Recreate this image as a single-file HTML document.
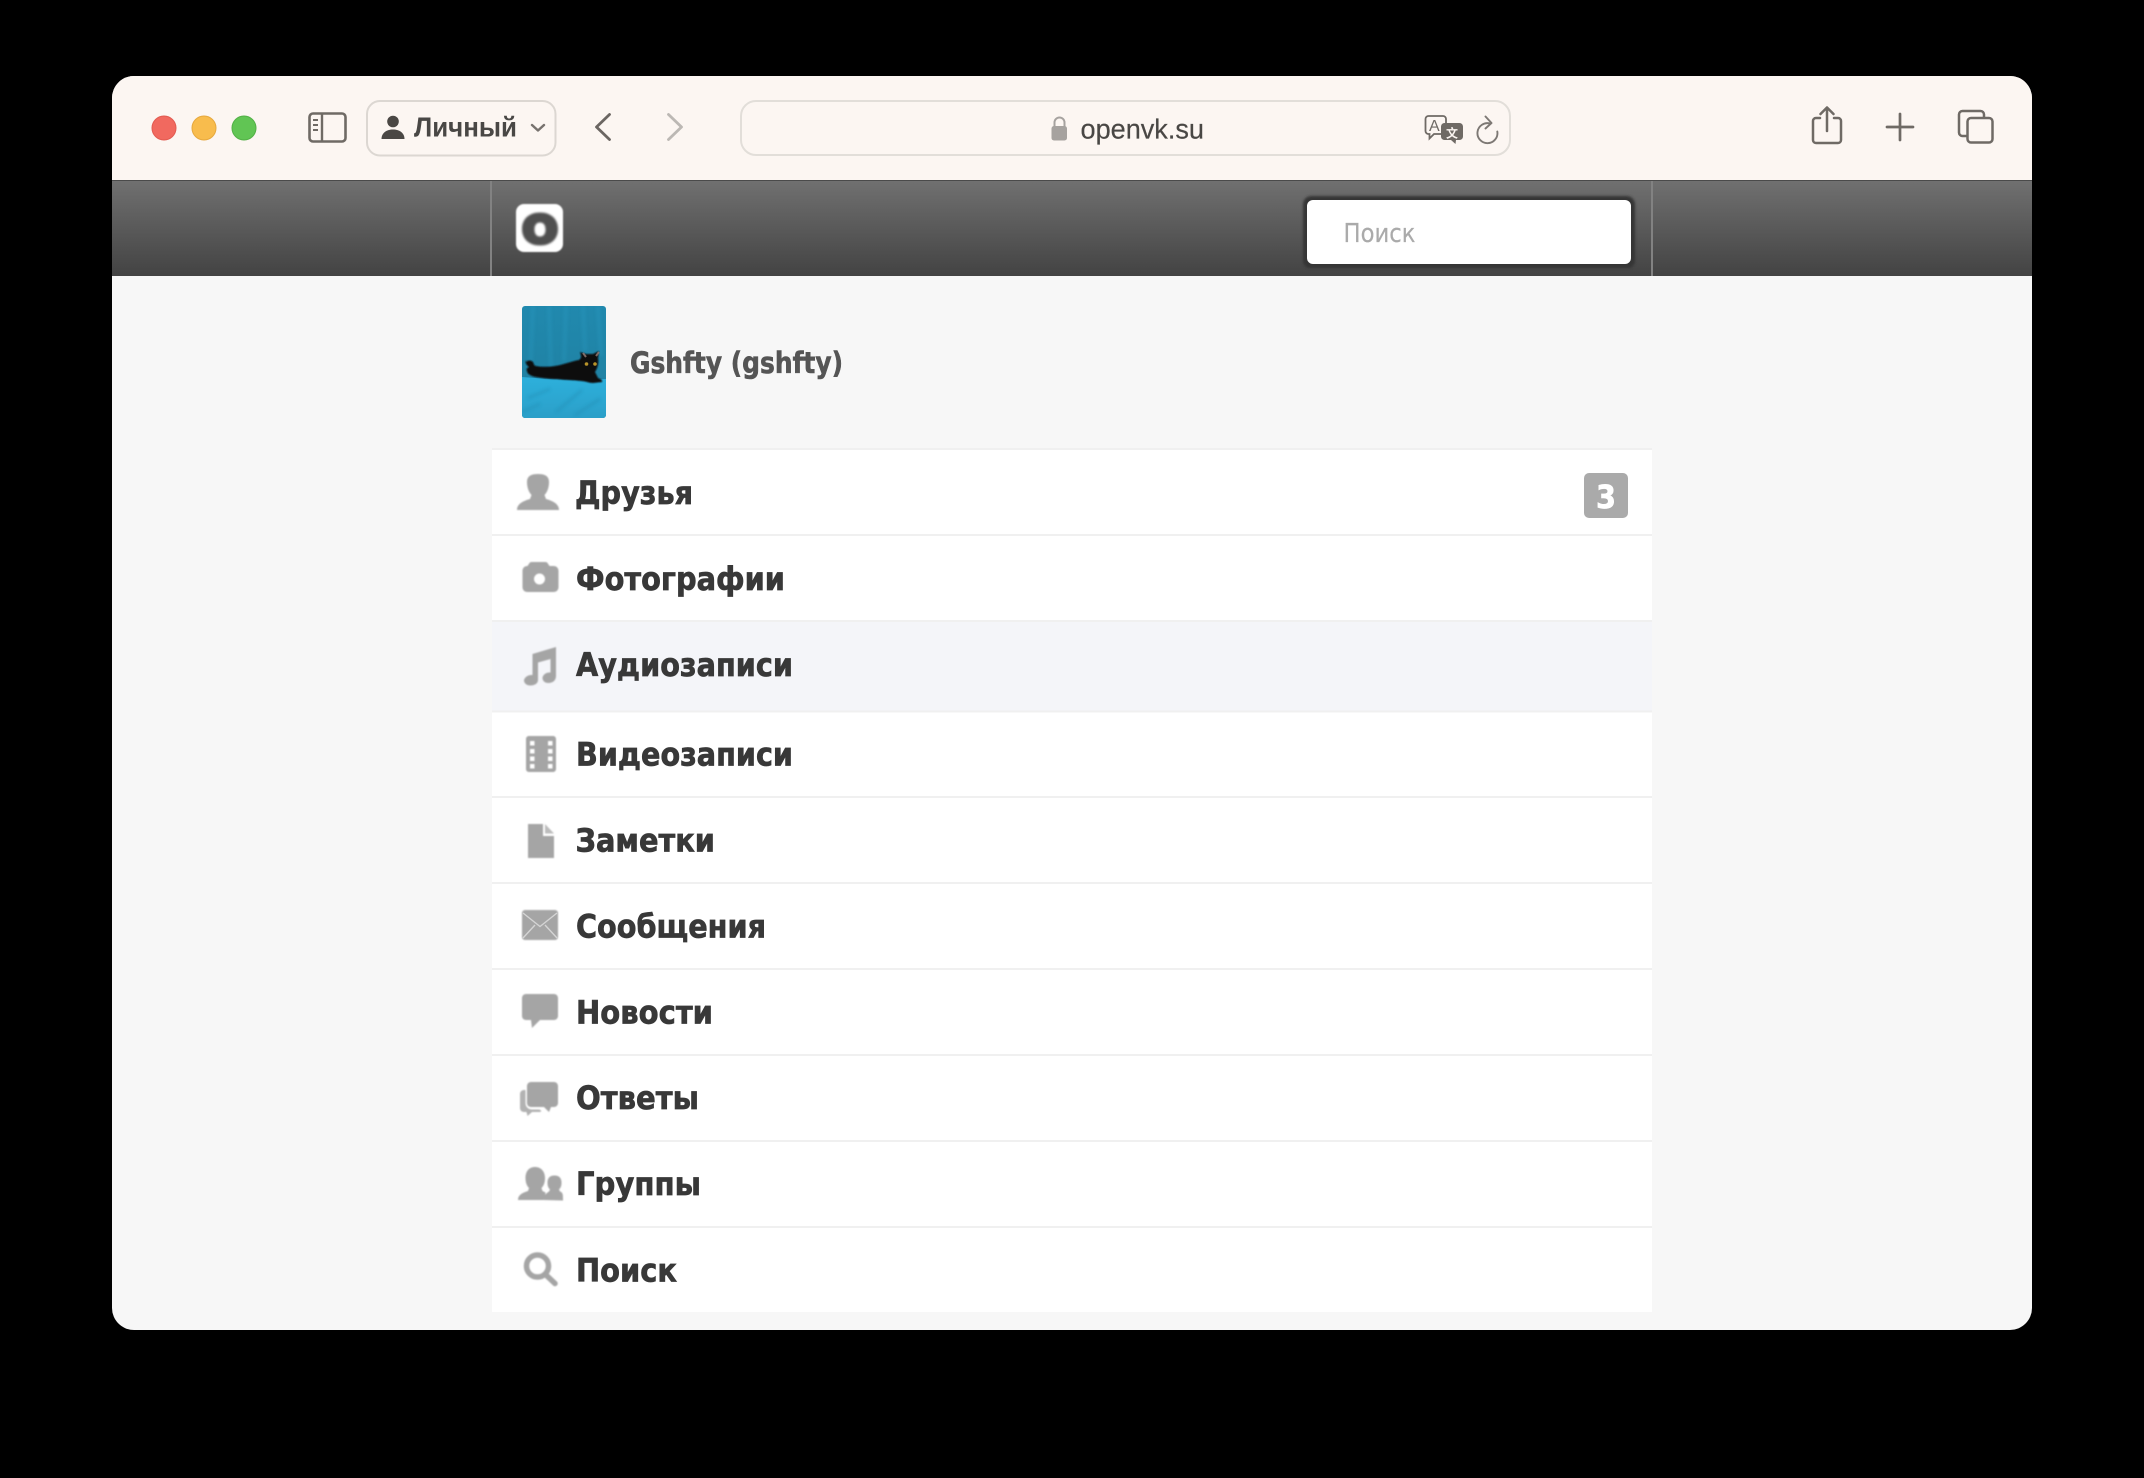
<!DOCTYPE html>
<html lang="ru">
<head>
<meta charset="utf-8">
<title>openvk.su</title>
<style>
html,body{margin:0;padding:0;background:#000;width:2144px;height:1478px;overflow:hidden}
svg{display:block}
.m{font-family:"DejaVu Sans",sans-serif;font-weight:700;font-size:32px;fill:#393939;stroke:#393939;stroke-width:.7px}
.ic{fill:#a5a5a5}
</style>
</head>
<body>
<svg xmlns="http://www.w3.org/2000/svg" width="2144" height="1478" viewBox="0 0 2144 1478">
<defs>
<clipPath id="win"><rect x="112" y="76" width="1920" height="1254" rx="22"/></clipPath>
<clipPath id="av"><rect x="522" y="306" width="84" height="112" rx="3"/></clipPath>
<linearGradient id="hd" x1="0" y1="0" x2="0" y2="1"><stop offset="0" stop-color="#707070"/><stop offset="1" stop-color="#434343"/></linearGradient>
<linearGradient id="avt" x1="0" y1="0" x2="0" y2="1"><stop offset="0" stop-color="#2189ae"/><stop offset="1" stop-color="#1f7f9f"/></linearGradient>
<linearGradient id="avb" x1="0" y1="0" x2="0" y2="1"><stop offset="0" stop-color="#2db0dc"/><stop offset="1" stop-color="#2b9fc8"/></linearGradient>
<filter id="b1" x="-20%" y="-20%" width="140%" height="140%"><feGaussianBlur stdDeviation="0.9"/></filter>
<filter id="b2" x="-5%" y="-30%" width="110%" height="160%"><feGaussianBlur stdDeviation="0.35"/></filter>
<filter id="b3" x="-20%" y="-20%" width="140%" height="140%"><feGaussianBlur stdDeviation="1.6"/></filter>
<filter id="b4" x="-20%" y="-20%" width="140%" height="140%"><feGaussianBlur stdDeviation="1"/></filter>
<filter id="sh" x="-5%" y="-10%" width="110%" height="120%"><feGaussianBlur stdDeviation="1.2"/></filter>
</defs>

<g clip-path="url(#win)">
  <rect x="112" y="76" width="1920" height="1254" fill="#f7f7f7"/>
  <!-- toolbar -->
  <rect x="112" y="76" width="1920" height="104" fill="#fcf6f2"/>
  <rect x="112" y="180" width="1920" height="1.5" fill="#4a4a4a"/>
  <!-- header -->
  <rect x="112" y="181" width="1920" height="95" fill="url(#hd)"/>
  <rect x="490" y="181" width="2" height="95" fill="#828282"/>
  <rect x="1651" y="181" width="2" height="95" fill="#828282"/>

  <!-- menu rows -->
  <rect x="492" y="449" width="1160" height="863" fill="#fff"/>
  <rect x="492" y="622" width="1160" height="89" fill="#f4f5f9"/>
  <g fill="#f0f0f0">
    <rect x="492" y="448" width="1160" height="2"/>
    <rect x="492" y="534" width="1160" height="2"/>
    <rect x="492" y="620" width="1160" height="2"/>
    <rect x="492" y="710.5" width="1160" height="2"/>
    <rect x="492" y="796" width="1160" height="2"/>
    <rect x="492" y="882" width="1160" height="2"/>
    <rect x="492" y="968" width="1160" height="2"/>
    <rect x="492" y="1054" width="1160" height="2"/>
    <rect x="492" y="1140" width="1160" height="2"/>
    <rect x="492" y="1226" width="1160" height="2"/>
  </g>
</g>

<!-- traffic lights -->
<circle cx="164" cy="128" r="12" fill="#f1695f" stroke="#e25a50" stroke-width="1"/>
<circle cx="204" cy="128" r="12" fill="#f8bc4d" stroke="#e6a83d" stroke-width="1"/>
<circle cx="244" cy="128" r="12" fill="#61c554" stroke="#52b046" stroke-width="1"/>

<!-- sidebar icon -->
<g fill="none" stroke="#6f6a65">
  <rect x="309.5" y="113.5" width="36" height="28" rx="3.5" stroke-width="2.6"/>
  <path d="M322 113v28" stroke-width="2.4"/>
  <path d="M313 120h5M313 125h5M313 130h5" stroke-width="2"/>
</g>

<!-- profile button -->
<rect x="367" y="101" width="188.500" height="54.500" rx="13" fill="#fcf6f2" stroke="#dcd7d2" stroke-width="2"/>
<circle cx="393" cy="121.500" r="5.800" fill="#4a4744"/>
<path d="M381.500 139c0-6 5-9.500 11.500-9.500s11.500 3.500 11.500 9.500z" fill="#4a4744"/>
<text x="414" y="136.500" font-family="'Liberation Sans',sans-serif" font-weight="700" font-size="27.500" fill="#4a4744" textLength="103" lengthAdjust="spacingAndGlyphs" filter="url(#b2)">Личный</text>
<path d="M532 125l6 5.500 6-5.500" fill="none" stroke="#77726e" stroke-width="2.400" stroke-linecap="round" stroke-linejoin="round"/>

<!-- back / forward -->
<path d="M609.500 114.500l-13 12.500 13 12.500" fill="none" stroke="#6b6662" stroke-width="2.800" stroke-linecap="round" stroke-linejoin="round"/>
<path d="M668.500 114.500l13 12.500-13 12.500" fill="none" stroke="#bcb8b4" stroke-width="2.800" stroke-linecap="round" stroke-linejoin="round"/>

<!-- URL bar -->
<rect x="741" y="101" width="769" height="54" rx="15" fill="#fcf6f2" stroke="#e2ded9" stroke-width="2"/>
<path d="M1054.500 127v-4.500a5 5 0 0 1 10 0v4.500" fill="none" stroke="#a6a29f" stroke-width="2"/>
<rect x="1051.500" y="126" width="15.500" height="14.500" rx="2.500" fill="#a6a29f"/>
<text x="1080.500" y="138.500" font-family="'Liberation Sans',sans-serif" font-size="27.500" fill="#4a4744" stroke="#4a4744" stroke-width=".2" textLength="123.500" lengthAdjust="spacingAndGlyphs" filter="url(#b2)">openvk.su</text>

<!-- translate -->
<path d="M1428.500 116h14.500a3 3 0 0 1 3 3v12a3 3 0 0 1-3 3h-9l-4.500 4.500v-4.500h-1a3 3 0 0 1-3-3v-12a3 3 0 0 1 3-3z" fill="#fcf6f2" stroke="#6f6a65" stroke-width="1.800"/>
<text x="1429" y="131" font-family="'Liberation Sans',sans-serif" font-size="16" fill="#6f6a65">A</text>
<path d="M1444.500 123h15a3.500 3.500 0 0 1 3.500 3.500v10a3.500 3.500 0 0 1-3.500 3.500h-3.500l-.5 4-4.500-4h-6.500a3.500 3.500 0 0 1-3.500-3.500v-10a3.500 3.500 0 0 1 3.500-3.500z" fill="#6f6a65"/>
<text x="1446" y="137.500" font-family="'Noto Sans CJK SC',sans-serif" font-size="12" font-weight="700" fill="#fcf6f2">文</text>

<!-- reload -->
<path d="M1490 123.500a10 10 0 1 0 7.300 8" fill="none" stroke="#7d7874" stroke-width="1.900" stroke-linecap="round"/>
<path d="M1485.500 116.500l6 6.500-6 5.500" fill="none" stroke="#7d7874" stroke-width="1.900" stroke-linecap="round" stroke-linejoin="round"/>

<!-- share -->
<g fill="none" stroke="#6f6a65" stroke-width="2.500" stroke-linecap="round" stroke-linejoin="round">
  <path d="M1820 118h-4a3 3 0 0 0-3 3v19a3 3 0 0 0 3 3h22a3 3 0 0 0 3-3v-19a3 3 0 0 0-3-3h-4"/>
  <path d="M1827 131V108.500M1820.500 114l6.500-6.500 6.500 6.500"/>
  <path d="M1900 114v26M1887 127h26" stroke-width="2.700"/>
  <path d="M1967 136h-4.500a3.500 3.500 0 0 1-3.500-3.500V114.500a3.500 3.500 0 0 1 3.500-3.500h18a3.500 3.500 0 0 1 3.500 3.500v3"/>
  <rect x="1967.500" y="118" width="25" height="24.500" rx="3.500"/>
</g>

<!-- logo -->
<rect x="516" y="204" width="47" height="48" rx="8" fill="#fff" filter="url(#b1)"/>
<path fill-rule="evenodd" d="M540 212.500c11 0 18 6.500 18 16.500s-7 16.500-18 16.500-18-6.500-18-16.500 7-16.500 18-16.500zM540 222.500c-3.500 0-5.500 2.600-5.500 7s2 7 5.500 7 5.500-2.600 5.500-7-2-7-5.500-7z" fill="#505050" filter="url(#b4)"/>

<!-- search box -->
<path d="M1312 196h314c5.500 0 9 3.500 9 9v55c0 4-2 7-5 8h-322c-3-1-5-4-5-8v-55c0-5.500 3.500-9 9-9z" fill="#343434" filter="url(#sh)"/>
<rect x="1307" y="200" width="324" height="64" rx="6" fill="#fff"/>
<text x="1343.500" y="242" font-family="'DejaVu Sans',sans-serif" font-size="25.500" fill="#aaa" stroke="#aaa" stroke-width=".2" textLength="72" lengthAdjust="spacingAndGlyphs" filter="url(#b2)">Поиск</text>

<!-- avatar -->
<g clip-path="url(#av)">
  <rect x="522" y="306" width="84" height="112" fill="url(#avt)"/>
  <g stroke="#2f9fc6" stroke-width="4" opacity=".3" filter="url(#b3)" fill="none">
    <path d="M533 306l-3 70M549 306l2 65M566 306l-2 55M583 306l2 45M598 306l3 50"/>
  </g>
  <path d="M522 377c25 2 50 4 84 2v39h-84z" fill="url(#avb)"/>
  <g stroke="#218cb2" stroke-width="2" opacity=".6" filter="url(#b3)" fill="none">
    <path d="M528 398l22-9M556 412l26-22M522 412l18-8M575 415l25-16"/>
  </g>
  <path d="M526 362c2-2 5-2 7 0 1 2 1 4 3 4 5 1 12 1 19 0 8-1 17-5 24-6 2-2 2-2 2-4l-1-4 6 2h7l6-3-1 7c1 6-1 11-3 14l3 6c2 1 5 2 4 4l-9 1c-4 0-8-2-12-2-8-1-16-1-24-2-6 0-15-1-21-2-5-1-9-3-9-6-1-2 0-3 2-4-3-2-4-5-3-7z" fill="#0b0b0e" filter="url(#b1)"/>
  <path d="M583 353l3 4M599 352l-3 4" stroke="#9a7f78" stroke-width="2" opacity=".8"/>
  <circle cx="586.500" cy="364" r="1.800" fill="#b8932a"/>
  <circle cx="595" cy="364" r="1.800" fill="#b8932a"/>
</g>

<!-- name -->
<text x="630" y="373" font-family="'DejaVu Sans',sans-serif" font-weight="700" font-size="29" fill="#555" stroke="#555" stroke-width=".6" textLength="213" lengthAdjust="spacingAndGlyphs" filter="url(#b2)">Gshfty (gshfty)</text>

<!-- menu text -->
<g filter="url(#b2)">
  <text class="m" x="575" y="504" textLength="118" lengthAdjust="spacingAndGlyphs">Друзья</text>
  <text class="m" x="576" y="590" textLength="209" lengthAdjust="spacingAndGlyphs">Фотографии</text>
  <text class="m" x="576" y="676" textLength="217" lengthAdjust="spacingAndGlyphs">Аудиозаписи</text>
  <text class="m" x="576" y="765.500" textLength="217" lengthAdjust="spacingAndGlyphs">Видеозаписи</text>
  <text class="m" x="575.500" y="851.500" textLength="139.500" lengthAdjust="spacingAndGlyphs">Заметки</text>
  <text class="m" x="576" y="937.500" textLength="190" lengthAdjust="spacingAndGlyphs">Сообщения</text>
  <text class="m" x="576" y="1023.500" textLength="137" lengthAdjust="spacingAndGlyphs">Новости</text>
  <text class="m" x="576" y="1109" textLength="123" lengthAdjust="spacingAndGlyphs">Ответы</text>
  <text class="m" x="576" y="1195" textLength="125" lengthAdjust="spacingAndGlyphs">Группы</text>
  <text class="m" x="576" y="1281.500" textLength="101" lengthAdjust="spacingAndGlyphs">Поиск</text>
</g>

<!-- badge -->
<rect x="1584" y="473" width="44" height="45" rx="5" fill="#aaa"/>
<text x="1596" y="508" font-family="'DejaVu Sans',sans-serif" font-weight="700" font-size="32" fill="#fff" stroke="#fff" stroke-width=".7" textLength="20" lengthAdjust="spacingAndGlyphs">3</text>

<!-- icons -->
<g class="ic" filter="url(#b1)">
  <!-- friends -->
  <path d="M517 510c0-6 6-9 13-11l1.500-4c-3-3-4.500-8-4.500-13 0-6 4-8 11-8s11 2 11 8c0 5-1.500 10-4.500 13l1.500 4c7 2 13 5 13 11z"/>
  <!-- camera -->
  <path fill-rule="evenodd" d="M527.500 566l2-3c.5-.7 1.500-1 2.500-1h13c1 0 2 .3 2.500 1l2 3h4c3 0 5 2 5 5v16c0 3-2 5-5 5h-26c-3 0-5-2-5-5v-16c0-3 2-5 5-5zM539.500 573.500a5.500 5.500 0 1 0 0 11 5.500 5.500 0 1 0 0-11z"/>
  <!-- music -->
  <g transform="translate(-1 0)">
  <path d="M533.500 654l23.500-7v29c0 4.500-3.500 7-7.500 7s-6-2.500-6-5 3-6 8-5.500V659l-12.500 3.500V680c0 3.500-3.500 5.500-7.500 5.500s-6.500-2.500-6.500-5 3.500-6 8.500-5.500z"/>
  </g>
  <!-- film -->
  <path fill-rule="evenodd" d="M529 736h24c1.700 0 3 1.300 3 3v30c0 1.700-1.300 3-3 3h-24c-1.700 0-3-1.300-3-3v-30c0-1.700 1.300-3 3-3zM530 741v4.500h4.500V741zM548 741v4.500h4.500V741zM530 749v4.500h4.500V749zM548 749v4.500h4.500V749zM530 756.500v4.500h4.500v-4.500zM548 756.500v4.500h4.500v-4.500zM530 764v4.500h4.500V764zM548 764v4.500h4.500V764z"/>
  <!-- notes -->
  <path d="M528 824h15v12h11v22h-26z"/>
  <path d="M545 824l9 9.500h-9z" opacity=".75"/>
  <!-- messages -->
  <rect x="522" y="910" width="36" height="30" rx="3"/>
  <!-- news -->
  <path d="M526 994h28c2.200 0 4 1.800 4 4v18c0 2.200-1.800 4-4 4h-14l-8 8-1-8h-5c-2.200 0-4-1.800-4-4v-18c0-2.200 1.800-4 4-4z"/>
  <!-- replies -->
  <path d="M531 1082h23c2.200 0 4 1.800 4 4v17c0 2.200-1.800 4-4 4h-3l-2 5-5-5h-13c-2.200 0-4-1.800-4-4v-17c0-2.200 1.800-4 4-4z"/>
  <path opacity=".85" d="M524 1090h1.500v13c0 3.500 2.500 6.300 6 6.500h8l2 1.500-1.500 1h-8l-4.500 4-1-4h-2.500c-2.200 0-4-1.800-4-4v-14c0-2.200 1.800-4 4-4z"/>
  <!-- groups -->
  <path d="M518 1200c0-5 4-7 10-9l1-3c-2.500-2.500-3.500-6-3.500-10 0-6 3-11 9.500-11s10 5 10 11c0 4-1 7.500-3.500 10l1 3c1 .5 2 1 3 1.500l-1 7.500z"/>
  <path d="M545 1200c0-1.500 0-3 1-5 1-1.500 2.500-2.500 4-3.500l1-2c-2-2-2.500-4-2.500-7 0-4 2-7 7-7s7 3 7 7c0 3-.5 5-2.500 7l1 2c3 1 3 3 3 9z" transform="translate(-1 0)"/>
</g>
<!-- envelope creases -->
<g filter="url(#b2)" fill="none" stroke="#d4d4d4" stroke-width="1.400">
  <path d="M523 913l17 13.500 17-13.500M523 938l12-13M557 938l-12-13"/>
</g>
<g filter="url(#b1)" fill="none" stroke="#a5a5a5">
  <circle cx="537.500" cy="1266" r="11" stroke-width="5.500"/>
  <path d="M546 1275l9 8.500" stroke-width="5.500" stroke-linecap="round"/>
</g>
</svg>
</body>
</html>
